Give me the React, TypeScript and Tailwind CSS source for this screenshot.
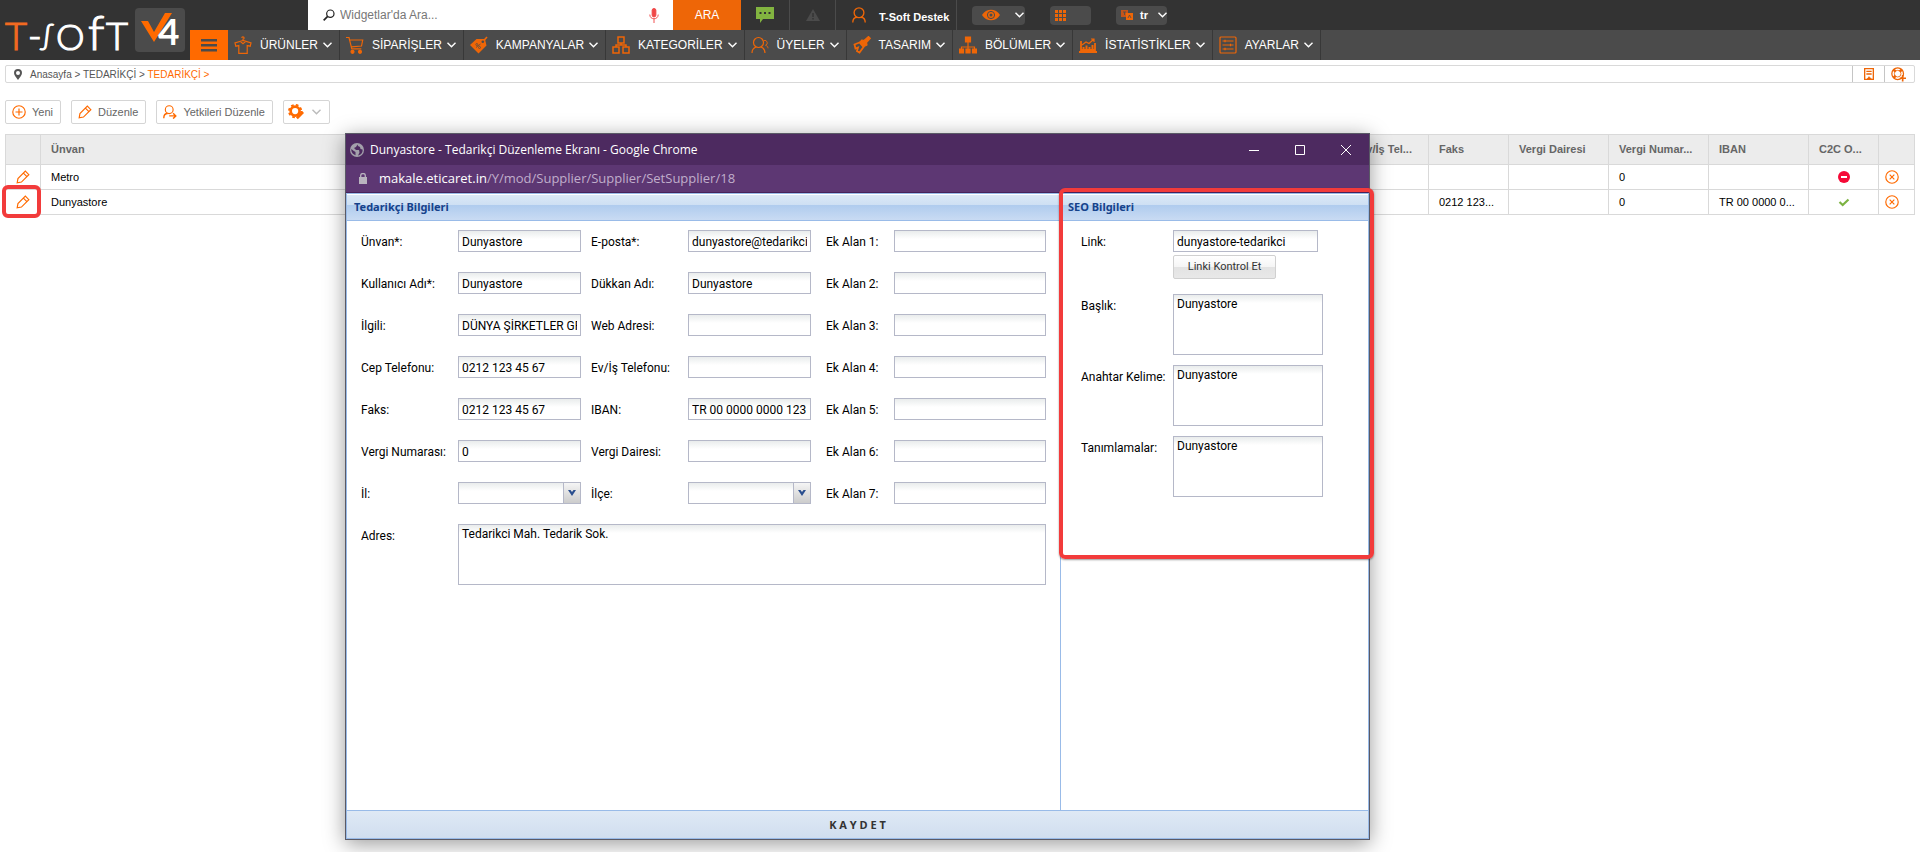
import type { ReactNode } from 'react'

interface NavItem {
  label: string
  icon: ReactNode
}

interface Supplier {
  name: string
  fax: string
  taxNumber: string
  iban: string
  c2c: boolean
}

const suppliers: Supplier[] = [
  { name: 'Metro', fax: '', taxNumber: '0', iban: '', c2c: false },
  { name: 'Dunyastore', fax: '0212 123...', taxNumber: '0', iban: 'TR 00 0000 0...', c2c: true },
]

function Svg({ children, className = 'h-[18px] w-[18px]' }: { children: ReactNode; className?: string }) {
  return (
    <svg viewBox="0 0 18 18" className={`shrink-0 ${className}`} fill="none" stroke="currentColor" strokeWidth="1.2" aria-hidden="true">
      {children}
    </svg>
  )
}

function Chevron({ className = '' }: { className?: string }) {
  return (
    <svg viewBox="0 0 9 6" className={`h-1.5 w-[9px] shrink-0 ${className}`} fill="none" stroke="currentColor" strokeWidth="1.4" aria-hidden="true">
      <path d="m.5.700 4 4 4-4" />
    </svg>
  )
}

const navItems: NavItem[] = [
  {
    label: 'ÜRÜNLER',
    icon: (
      <Svg>
        <path d="M9 4.5V3.2a1.2 1.2 0 1 0-1.3-1.3M9 4.5 1 7l.8 3.2 3-.6v7.8h8.4V9.6l3 .6L17 7 9 4.5ZM6.5 5.6 9 7.8l2.5-2.2" />
      </Svg>
    ),
  },
  {
    label: 'SİPARİŞLER',
    icon: (
      <Svg>
        <path d="M0 1.5h3l2.8 11.3h9.5M3.700 4h13l-1.200 6-10.200.8" />
        <circle cx="6.5" cy="15.8" r="1.5" fill="currentColor" />
        <circle cx="14" cy="15.8" r="1.5" fill="currentColor" />
      </Svg>
    ),
  },
  {
    label: 'KAMPANYALAR',
    icon: (
      <Svg>
        <path d="M0 9 6.5 3H15l1.5 6.5L8.5 17.5Z" fill="currentColor" stroke="none" />
        <path d="m12.5 6 4.5-5" strokeWidth="1.6" />
        <circle cx="12.8" cy="5.8" r="1.3" fill="#4b4b4b" stroke="none" />
        <path d="m6 11.5 4.5-3.5" stroke="#4b4b4b" strokeWidth=".8" />
        <circle cx="6.8" cy="8.5" r="1" stroke="#4b4b4b" strokeWidth=".7" />
        <circle cx="9.5" cy="11.5" r="1" stroke="#4b4b4b" strokeWidth=".7" />
      </Svg>
    ),
  },
  {
    label: 'KATEGORİLER',
    icon: (
      <Svg>
        <path d="M6 1h6v6H6ZM1 11h6v6H1ZM11 11h6v6h-6ZM9 7v2M4 11V9h10v2" strokeWidth="1.5" />
      </Svg>
    ),
  },
  {
    label: 'ÜYELER',
    icon: (
      <Svg>
        <circle cx="7.5" cy="6.5" r="5" />
        <path d="M1 17c0-3 1.500-5 4-6M14 17c0-3-1.500-5-4-6" />
        <path d="M13 4.500a2.500 2.500 0 1 1 1.500 4.800c1.500.5 2.500 1.200 2.500 3" strokeWidth=".9" />
      </Svg>
    ),
  },
  {
    label: 'TASARIM',
    icon: (
      <Svg>
        <path d="m9 4 2 .5L15.5.5l1.800 1.800-3.800 4.200L14 9l-3 1.500L7 6Z" fill="currentColor" />
        <path d="m6.500 6.500-5 2 1 4 2.500-1-1 3.500 2.500 1.500 4-5.500Z" strokeWidth="1.8" />
      </Svg>
    ),
  },
  {
    label: 'BÖLÜMLER',
    icon: (
      <Svg>
        <path d="M6.500 1h5v5h-5ZM.5 13h4v4h-4ZM7 13h4v4H7ZM13.500 13h4v4h-4Z" fill="currentColor" />
        <path d="M9 6v8M2.500 14v-3h13v3" />
      </Svg>
    ),
  },
  {
    label: 'İSTATİSTİKLER',
    icon: (
      <Svg>
        <path d="M2 5v9h14V7M0 16h18" strokeWidth="1.8" />
        <path d="m3 9 4-3 3 1.500L15 3M12 3h3v3" />
        <path d="M4.500 14v-3M7.500 14V9.500M10.500 14v-3M13.500 14V9" strokeWidth="2" />
      </Svg>
    ),
  },
  {
    label: 'AYARLAR',
    icon: (
      <Svg>
        <rect x="1" y="1" width="16" height="16" rx="1" />
        <path d="M3.500 5h11M3.500 9h11M3.500 13h11M6 3.800v2.400M11.500 7.800v2.400M6 11.800v2.400" />
      </Svg>
    ),
  },
]

function Pencil() {
  return (
    <Svg className="h-[14px] w-[14px]">
      <path d="M1.500 16.500 2.500 11 12 1.500l4.500 4.500L7 15.500ZM9.500 4l4.500 4.500" strokeWidth="1.5" />
    </Svg>
  )
}

function Logo() {
  return (
    <svg viewBox="0 0 190 60" className="h-[60px] w-[190px] shrink-0" role="img" aria-label="T-Soft V4">
      <g fontFamily="Lato, sans-serif" fontWeight="300" fill="#ffffff" stroke="#ffffff" strokeWidth="1.2">
        <text x="5" y="50" fontSize="38" fill="#f26a21" stroke="#f26a21">T</text>
        <text x="28" y="49" fontSize="37">-</text>
        <text x="44" y="45" fontSize="29" fontStyle="italic">ʃ</text>
        <text x="56" y="50" fontSize="36">O</text>
        <text x="88" y="50" fontSize="48">f</text>
        <text x="106" y="50" fontSize="38">T</text>
      </g>
      <rect x="135" y="8" width="50" height="44" rx="4" fill="#4b4b4b" />
      <path d="M141 21h7l6 11 11-19h7l-18 29Z" fill="#ff6a00" />
      <text x="158" y="45" fontFamily="Lato, sans-serif" fontWeight="700" fontSize="37" fill="#ffffff">4</text>
    </svg>
  )
}

function Header() {
  return (
    <header className="flex h-[60px] bg-[#333333] text-white">
      <Logo />
      <div className="flex min-w-0 flex-1 flex-col">
        <div className="flex h-[30px]">
          <div className="ml-[118px] flex h-8 w-[365px] items-center border-b-2 border-[#b9b9b9] bg-white pr-[14px] pl-[15px]">
            <Svg className="h-[12px] w-[12px] text-[#222]">
              <circle cx="11" cy="7" r="5.5" strokeWidth="1.8" />
              <path d="m7 11-6 6" strokeWidth="2.5" />
            </Svg>
            <input
              type="text"
              aria-label="Widgetlar'da Ara"
              placeholder="Widgetlar'da Ara..."
              className="ml-[5px] min-w-0 flex-1 text-xs text-[#333] outline-none placeholder:text-[#777]"
            />
            <button type="button" aria-label="Sesli arama">
              <svg viewBox="0 0 10 16" className="h-[15px] w-[10px]" fill="none" stroke="#f04848" aria-hidden="true">
                <rect x="3" y="0.5" width="4" height="9" rx="2" fill="#f04848" />
                <path d="M.5 7c0 6 9 6 9 0M5 11.500V16" />
              </svg>
            </button>
          </div>
          <button type="button" className="w-[68px] bg-[#ee6607] text-xs">ARA</button>
          <button type="button" aria-label="Mesajlar" className="flex w-[49px] items-center justify-center border-r border-[#4b4b4b]">
            <svg viewBox="0 0 18 16" className="h-4 w-[18px]" aria-hidden="true">
              <path d="M0 0h18v12H7l-3 4v-4H0Z" fill="#82b440" />
              <path d="M3.500 5h2v2h-2ZM8 5h2v2H8ZM12.500 5h2v2h-2Z" fill="#333" />
            </svg>
          </button>
          <button type="button" aria-label="Uyarılar" className="flex w-[46px] items-center justify-center border-r border-[#4b4b4b]">
            <svg viewBox="0 0 14 12" className="h-3 w-[14px]" aria-hidden="true">
              <path d="m7 0 7 12H0Z" fill="#4b4b4b" />
              <path d="M6.300 4h1.400v4H6.300ZM6.300 9h1.400v1.400H6.300Z" fill="#333" />
            </svg>
          </button>
          <button type="button" className="flex w-[121px] items-center gap-3 border-r border-[#4b4b4b] pl-[15px] text-[11px] font-bold">
            <Svg className="h-4 w-4 text-[#ee6607]">
              <circle cx="9" cy="6.5" r="5.5" strokeWidth="1.5" />
              <path d="M2 17.500c0-4 2-6 5-6M16 17.500c0-4-2-6-5-6" strokeWidth="1.5" />
            </Svg>
            <span className="pt-1">T-Soft Destek</span>
          </button>
          <div className="flex items-center gap-[25px] pl-[15px]">
            <button type="button" aria-label="Görünüm" className="flex h-[19px] w-[53px] items-center justify-between rounded bg-[#4b4b4b] pr-px pl-[10px]">
              <svg viewBox="0 0 18 12" className="h-3 w-[18px]" aria-hidden="true">
                <path d="M0 6c4-7 14-7 18 0-4 7-14 7-18 0Z" fill="#ee6607" />
                <circle cx="9" cy="6" r="3.6" fill="none" stroke="#4b4b4b" />
                <circle cx="9" cy="6" r="1.5" fill="#4b4b4b" />
              </svg>
              <Chevron />
            </button>
            <button type="button" aria-label="Uygulamalar" className="flex h-[19px] w-[41px] items-center rounded bg-[#4b4b4b] pl-[5px]">
              <svg viewBox="0 0 11 11" className="h-[11px] w-[11px]" fill="#ee6607" aria-hidden="true">
                <path d="M0 0h3v3H0ZM4 0h3v3H4ZM8 0h3v3H8ZM0 4h3v3H0ZM4 4h3v3H4ZM8 4h3v3H8ZM0 8h3v3H0ZM4 8h3v3H4ZM8 8h3v3H8Z" />
              </svg>
            </button>
            <button type="button" className="flex h-[19px] w-[51px] items-center rounded bg-[#4b4b4b] pl-[5px] text-[11px] font-bold">
              <svg viewBox="0 0 12 10" className="h-[10px] w-3" aria-hidden="true">
                <path d="M0 0h7v7H0Z" fill="#c4551a" />
                <path d="M5 3h7v7H5Z" fill="#ee6607" />
                <path d="M2 2h3M3.500 2v3M7 8l1.500-3L10 8" stroke="#4b4b4b" strokeWidth=".8" fill="none" />
              </svg>
              <span className="ml-[7px] flex-1 text-left">tr</span>
              <Chevron />
            </button>
          </div>
        </div>
        <nav className="flex h-[30px] bg-[#4b4b4b]">
          <button type="button" aria-label="Menü" className="flex w-[38px] items-center justify-center bg-[#ff6a00] pt-px">
            <svg viewBox="0 0 16 13" className="h-[13px] w-4" fill="#4b4b4b" aria-hidden="true">
              <path d="M0 0h16v2.500H0ZM0 5h16v2.500H0ZM0 10h16v2.500H0Z" />
            </svg>
          </button>
          {navItems.map((item) => (
            <a key={item.label} href="#" className="flex items-center border-r border-[#383838] pr-[7px] pl-[6px] text-xs">
              <span className="text-[#ee6607]">{item.icon}</span>
              <span className="mr-[5px] ml-2 whitespace-nowrap">{item.label}</span>
              <Chevron />
            </a>
          ))}
        </nav>
      </div>
    </header>
  )
}

function ToolButton({ icon, children }: { icon: ReactNode; children: ReactNode }) {
  return (
    <button type="button" className="flex h-6 items-center gap-[6px] rounded-xs border border-[#d5d5d5] bg-white pr-[7px] pl-1.5 text-[11px] text-[#666]">
      <span className="text-[#ff6a00]">{icon}</span>
      {children}
    </button>
  )
}

function SupplierTable() {
  const th = 'h-[30px] overflow-hidden border border-[#d9d9d9] pl-[10px] text-left font-bold whitespace-nowrap'
  const td = 'h-[25px] overflow-hidden border border-[#d9d9d9] pl-[10px] whitespace-nowrap'
  return (
    <table className="mt-[10px] w-full table-fixed border-collapse text-[11px] text-black">
      <colgroup>
        <col className="w-[35px]" />
        <col />
        <col className="w-20" />
        <col className="w-20" />
        <col className="w-[100px]" />
        <col className="w-[100px]" />
        <col className="w-[100px]" />
        <col className="w-[70px]" />
        <col className="w-9" />
      </colgroup>
      <thead>
        <tr className="bg-[#ececec] text-[#666]">
          <th className={th}></th>
          <th className={th}>Ünvan</th>
          <th className={th}>Ev/İş Tel...</th>
          <th className={th}>Faks</th>
          <th className={th}>Vergi Dairesi</th>
          <th className={th}>Vergi Numar...</th>
          <th className={th}>IBAN</th>
          <th className={th}>C2C O...</th>
          <th className={th}></th>
        </tr>
      </thead>
      <tbody>
        {suppliers.map((s) => (
          <tr key={s.name}>
            <td className={td}>
              <button type="button" aria-label={`${s.name} düzenle`} className="block text-[#ff6a00]">
                <Pencil />
              </button>
            </td>
            <td className={td}>{s.name}</td>
            <td className={td}></td>
            <td className={td}>{s.fax}</td>
            <td className={td}></td>
            <td className={td}>{s.taxNumber}</td>
            <td className={td}>{s.iban}</td>
            <td className="h-[25px] border border-[#d9d9d9]">
              <svg viewBox="0 0 12 12" className="mx-auto h-3 w-3" aria-hidden="true">
                {s.c2c ? (
                  <path d="m1.500 6 3.200 3L10.500 3.500" fill="none" stroke="#7cb342" strokeWidth="2.2" />
                ) : (
                  <>
                    <circle cx="6" cy="6" r="6" fill="#f50a37" />
                    <path d="M3 5h6v2H3Z" fill="#fff" />
                  </>
                )}
              </svg>
            </td>
            <td className="h-[25px] border border-[#d9d9d9] pl-1.5">
              <button type="button" aria-label={`${s.name} sil`} className="block text-[#ff6a00]">
                <Svg className="h-[14px] w-[14px]">
                  <circle cx="9" cy="9" r="8" strokeWidth="1.5" />
                  <path d="m6 6 6 6M12 6l-6 6" strokeWidth="1.5" />
                </Svg>
              </button>
            </td>
          </tr>
        ))}
      </tbody>
    </table>
  )
}

const control =
  'rounded-none border border-[#b5b8c8] bg-white bg-[linear-gradient(#e9ecec,#ffffff_8px)] px-[3px] pt-px text-xs text-black outline-none'

function Field({ id, label, value = '', className }: { id: string; label: string; value?: string; className: string }) {
  return (
    <>
      <label htmlFor={id} className="pt-1 whitespace-nowrap">{label}</label>
      <input id={id} type="text" defaultValue={value} className={`h-[22px] ${control} ${className}`} />
    </>
  )
}

function SelectField({ id, label }: { id: string; label: string }) {
  return (
    <>
      <label htmlFor={id} className="pt-1">{label}</label>
      <div className="relative w-[123px]">
        <select id={id} className={`block h-[22px] w-full appearance-none ${control}`}>
          <option value=""></option>
        </select>
        <span className="pointer-events-none absolute inset-y-px right-px flex w-[17px] items-center justify-center border-l border-[#b5b8c8] bg-linear-to-b from-[#f5f5f5] to-[#cccccc]">
          <svg viewBox="0 0 8 6" className="h-1.5 w-2" fill="#2b4f8f" aria-hidden="true">
            <path d="M0 0h2.500L4 2 5.500 0H8L4 6Z" />
          </svg>
        </span>
      </div>
    </>
  )
}

function TextareaField({ id, label, value, className = '' }: { id: string; label: string; value: string; className?: string }) {
  return (
    <>
      <label htmlFor={id} className="pt-1 whitespace-nowrap">{label}</label>
      <textarea id={id} defaultValue={value} className={`block h-[61px] resize-none leading-4 ${control} ${className}`} />
    </>
  )
}

function PanelTitle({ children }: { children: ReactNode }) {
  return (
    <h2 className="flex h-[27px] items-center border-y border-t-white border-b-[#99bbe8] bg-[linear-gradient(#dbe8f6,#cddff3_42%,#b0ccee_42%,#c9dbf3)] pb-px pl-[7px] font-['Noto_Sans',sans-serif] text-[11px] font-bold text-[#15428b]">
      {children}
    </h2>
  )
}

function EditWindow() {
  const half = 'w-[123px]'
  return (
    <section className="absolute top-[133px] right-[550px] bottom-3 left-[345px] flex flex-col border border-[#5a5a66] bg-white shadow-[0_4px_20px_rgba(0,0,0,0.4)]">
      <div className="flex h-[31px] items-center bg-[#4d2a60] pl-1 font-['Open_Sans',sans-serif] text-xs text-white">
        <svg viewBox="0 0 14 14" className="mr-[6px] h-[14px] w-[14px]" aria-hidden="true">
          <circle cx="7" cy="7" r="7" fill="#a3a0ab" />
          <path d="M7.500 1.500 6 4l-2 1 2 2h3l.5 2.500L8 12.500c3-.5 5-3 4.500-6l-2-.5-.5-2L8 3ZM1.300 6l2.500 2 1.700 1v3.200C3 11.500 1 9 1.300 6Z" fill="#4d2a60" />
        </svg>
        <h1 className="flex-1">Dunyastore - Tedarikçi Düzenleme Ekranı - Google Chrome</h1>
        <div className="flex items-center gap-9 pr-[18px]">
          <button type="button" aria-label="Simge durumuna küçült">
            <svg viewBox="0 0 10 10" className="h-[10px] w-[10px]" stroke="white" aria-hidden="true"><path d="M0 5.500h10" /></svg>
          </button>
          <button type="button" aria-label="Ekranı kapla">
            <svg viewBox="0 0 10 10" className="h-[10px] w-[10px]" stroke="white" fill="none" aria-hidden="true"><path d="M.5.5h9v9h-9Z" /></svg>
          </button>
          <button type="button" aria-label="Kapat">
            <svg viewBox="0 0 10 10" className="h-[10px] w-[10px]" stroke="white" aria-hidden="true"><path d="m0 0 10 10M10 0 0 10" /></svg>
          </button>
        </div>
      </div>
      <div className="flex h-7 items-center border-b border-[#47225a] bg-[#5d3773] pl-[13px] font-['Open_Sans',sans-serif] text-[13px] text-[#c0aecb]">
        <svg viewBox="0 0 8 11" className="mr-3 h-[11px] w-2" aria-hidden="true">
          <path d="M0 4h8v7H0Z" fill="#b9b4bf" />
          <path d="M1.700 4V2.500a2.300 2 0 0 1 4.600 0V4" fill="none" stroke="#b9b4bf" strokeWidth="1.3" />
        </svg>
        <p><span className="text-white">makale.eticaret.in</span>/Y/mod/Supplier/Supplier/SetSupplier/18</p>
      </div>

      <form className="flex min-h-0 flex-1 flex-col border-x border-t border-[#99bbe8] font-['Roboto',sans-serif] text-xs leading-4 text-black">
        <div className="flex min-h-0 flex-1">
          <div className="min-w-0 flex-1">
            <PanelTitle>Tedarikçi Bilgileri</PanelTitle>
            <div className="grid grid-cols-[97px_133px_97px_138px_68px_1fr] gap-y-5 pt-[9px] pr-[14px] pl-[14px]">
              <Field id="unvan" label="Ünvan*:" value="Dunyastore" className={half} />
              <Field id="eposta" label="E-posta*:" value="dunyastore@tedarikci" className={half} />
              <Field id="ek1" label="Ek Alan 1:" className="w-full" />
              <Field id="kullanici" label="Kullanıcı Adı*:" value="Dunyastore" className={half} />
              <Field id="dukkan" label="Dükkan Adı:" value="Dunyastore" className={half} />
              <Field id="ek2" label="Ek Alan 2:" className="w-full" />
              <Field id="ilgili" label="İlgili:" value="DÜNYA ŞİRKETLER GRUBU" className={half} />
              <Field id="web" label="Web Adresi:" className={half} />
              <Field id="ek3" label="Ek Alan 3:" className="w-full" />
              <Field id="cep" label="Cep Telefonu:" value="0212 123 45 67" className={half} />
              <Field id="evis" label="Ev/İş Telefonu:" className={half} />
              <Field id="ek4" label="Ek Alan 4:" className="w-full" />
              <Field id="faks" label="Faks:" value="0212 123 45 67" className={half} />
              <Field id="iban" label="IBAN:" value="TR 00 0000 0000 123" className={half} />
              <Field id="ek5" label="Ek Alan 5:" className="w-full" />
              <Field id="vergino" label="Vergi Numarası:" value="0" className={half} />
              <Field id="vergidairesi" label="Vergi Dairesi:" className={half} />
              <Field id="ek6" label="Ek Alan 6:" className="w-full" />
              <SelectField id="il" label="İl:" />
              <SelectField id="ilce" label="İlçe:" />
              <Field id="ek7" label="Ek Alan 7:" className="w-full" />
              <TextareaField id="adres" label="Adres:" value="Tedarikci Mah. Tedarik Sok." className="col-span-5" />
            </div>
          </div>

          <div className="relative w-[308px] border-l border-[#99bbe8]">
            <PanelTitle>SEO Bilgileri</PanelTitle>
            <div className="grid grid-cols-[92px_150px] gap-y-[10px] pt-[9px] pl-5">
              <label htmlFor="link" className="pt-1">Link:</label>
              <div className="mb-[5px]">
                <input id="link" type="text" defaultValue="dunyastore-tedarikci" className={`block h-[22px] w-[145px] ${control}`} />
                <button type="button" className="mt-[3px] h-6 w-[103px] rounded-xs border border-[#d0d0d0] bg-[linear-gradient(#ffffff,#f5f5f5_50%,#e3e3e3_50%,#e8e8e8)] text-[11px] text-[#333]">
                  Linki Kontrol Et
                </button>
              </div>
              <TextareaField id="baslik" label="Başlık:" value="Dunyastore" />
              <TextareaField id="anahtar" label="Anahtar Kelime:" value="Dunyastore" />
              <TextareaField id="tanim" label="Tanımlamalar:" value="Dunyastore" />
            </div>
            {/* highlight around the SEO panel */}
            <div className="pointer-events-none absolute -top-[6px] -right-[6px] -left-[2px] h-[371px] rounded-md border-4 border-[#f23b3b] shadow-[0_1px_2px_rgba(0,0,0,0.4)]" />
          </div>
        </div>
        <button type="submit" className="h-[29px] border-y border-[#99bbe8] bg-linear-to-b from-[#dfe9f5] to-[#d0deef] font-['Noto_Sans',sans-serif] text-[11px] font-bold text-[#333]">
          K A Y D E T
        </button>
      </form>
    </section>
  )
}

export default function App() {
  return (
    <div className="relative min-h-screen overflow-hidden bg-white font-['Liberation_Sans',Arial,sans-serif]">
      <Header />
      <main className="p-[5px]">
        <div className="flex h-[18px] items-stretch rounded-xs border border-[#d9d9d9] text-[10px] text-[#555]">
          <div className="flex flex-1 items-center gap-1 pl-2">
            <svg viewBox="0 0 8 11" className="mr-1 h-[11px] w-2" aria-hidden="true">
              <path d="M4 0a4 4 0 0 1 4 4c0 2.500-2.500 4.500-4 7C2.500 8.500 0 6.500 0 4a4 4 0 0 1 4-4Z" fill="#555" />
              <circle cx="4" cy="4" r="2" fill="#fff" />
            </svg>
            <p>
              <a href="#">Anasayfa</a> &gt; <a href="#">TEDARİKÇİ</a> &gt; <a href="#" className="text-[#ff6a00]">TEDARİKÇİ &gt;</a>
            </p>
          </div>
          <button type="button" aria-label="Notlar" className="flex w-8 items-center justify-center border-l border-[#c5c5c5] text-[#ee6607]">
            <Svg className="h-3 w-3">
              <path d="M2.500 1h13v16h-13ZM5 5h8M5 9h8" strokeWidth="2" />
              <path d="m6 17 3-4 4 4Z" fill="currentColor" />
            </Svg>
          </button>
          <button type="button" aria-label="Destek" className="flex w-[30px] items-center border-l border-[#c5c5c5] pl-[6px] text-[#ee6607]">
            <Svg className="h-[15px] w-[15px]">
              <circle cx="8" cy="8" r="7" strokeWidth="1.5" />
              <circle cx="8" cy="8" r="4" strokeWidth="1" />
              <path d="m3 3 2.500 2.500M13 3l-2.500 2.500M3 13l2.500-2.500" strokeWidth="3" />
              <path d="M14 9.500v8M10.500 13.500H18" strokeWidth="2" />
            </Svg>
          </button>
        </div>

        <div className="mt-[17px] flex gap-[10px]">
          <ToolButton
            icon={
              <Svg className="h-[14px] w-[14px]">
                <circle cx="9" cy="9" r="8" strokeWidth="1.5" />
                <path d="M9 4.500v9M4.500 9h9" strokeWidth="1.5" />
              </Svg>
            }
          >
            Yeni
          </ToolButton>
          <ToolButton icon={<Pencil />}>Düzenle</ToolButton>
          <ToolButton
            icon={
              <Svg className="h-[14px] w-[14px]">
                <circle cx="8" cy="6" r="5" strokeWidth="1.5" />
                <path d="M1 17c0-3.500 2-6 5-6M8 14h8M13 10.500l3.500 3.500-3.500 3.500" strokeWidth="1.8" />
              </Svg>
            }
          >
            Yetkileri Düzenle
          </ToolButton>
          <button type="button" aria-label="Ayarlar" className="flex h-6 w-[47px] items-center justify-between rounded-xs border border-[#d5d5d5] pr-2 pl-1 text-[#ff6a00]">
            <Svg className="h-4 w-4">
              <circle cx="8" cy="8" r="5" strokeWidth="3" />
              <circle cx="8" cy="8" r="7" strokeWidth="2" strokeDasharray="3 2.500" />
              <path d="m10 16 7-7" strokeWidth="3" />
            </Svg>
            <Chevron className="text-[#bbb]" />
          </button>
        </div>

        <SupplierTable />
      </main>

      {/* highlight around the edit button of the second row */}
      <div className="pointer-events-none absolute top-[185px] left-[2px] h-[33px] w-[39px] rounded-md border-4 border-[#f23b3b]" />
      <EditWindow />
    </div>
  )
}
